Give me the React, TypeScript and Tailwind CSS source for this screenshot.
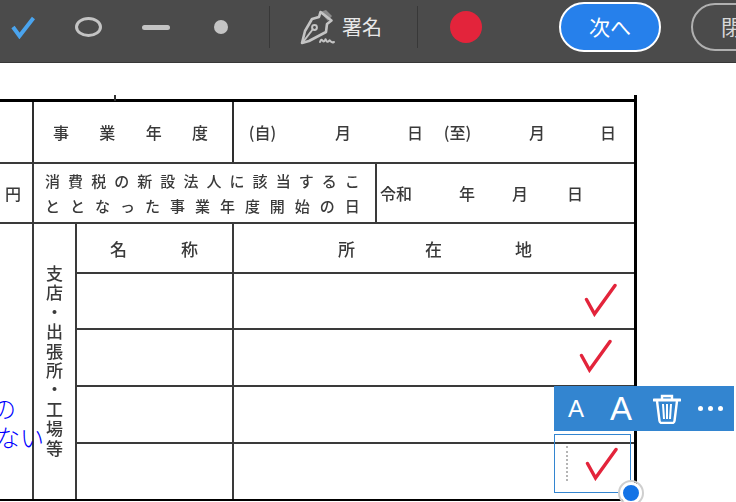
import React from 'react';

const doc = 'text-[#3a3a3a] blur-[0.45px] font-medium';

function Spread({ text, className }: { text: string; className?: string }) {
  return (
    <div className={`flex justify-between ${className ?? ''}`}>
      {text.split('').map((c, i) => (
        <span key={i}>{c}</span>
      ))}
    </div>
  );
}

function Mark({ className }: { className: string }) {
  return (
    <svg viewBox="0 0 34 34" className={`absolute w-[34px] h-[34px] ${className}`} fill="none">
      <path d="M2.5 16.5 L10.5 31 L31 2.5" stroke="#e3243b" strokeWidth="3.4" strokeLinecap="round" strokeLinejoin="miter" />
    </svg>
  );
}

function PenIcon() {
  return (
    <svg viewBox="0 0 36 36" className="w-[36px] h-[36px] shrink-0 ml-[30px]" fill="none">
      <path d="M20 3 L26 1 L32 7 L28 12 Z" fill="#8a8a8a" />
      <path d="M20.5 3 L31.5 11.5 L27 15 L26 23 L9 32 L2 34 L5 22 L12 10 L19 8 Z" stroke="#c4c4c4" strokeWidth="2.6" strokeLinejoin="round" />
      <path d="M3 33 L13 20" stroke="#c4c4c4" strokeWidth="2" />
      <circle cx="14.5" cy="18.5" r="2.4" stroke="#c4c4c4" strokeWidth="2" />
      <path d="M20 33 C22 27 23 36 25 31 C26 28 26 35 29 32 C30 29 30 35 34 33" stroke="#c4c4c4" strokeWidth="2" strokeLinecap="round" />
    </svg>
  );
}

function TrashIcon() {
  return (
    <svg viewBox="0 0 28 30" className="w-[28px] h-[30px] shrink-0 ml-[21px]" fill="none" stroke="#fff" strokeWidth="2.4">
      <path d="M1 6 H27" strokeWidth="3" strokeLinecap="round" />
      <path d="M9 5 V2 H19 V5" />
      <path d="M4 7 L6.5 27 Q6.7 29 9 29 H19 Q21.3 29 21.5 27 L24 7" />
      <path d="M10 10 L11 25 M14 10 V25 M18 10 L17 25" strokeWidth="2" />
    </svg>
  );
}

function Toolbar() {
  return (
    <div className="h-[63px] shrink-0 bg-[#4b4b4b] border-b border-[#383838] flex items-center pb-[8px] pl-[11px] overflow-hidden">
      <svg viewBox="0 0 24 24" className="w-[24px] h-[24px] shrink-0" fill="none">
        <path d="M2 12 L8.5 21 L22.5 3" stroke="#4aa4ee" strokeWidth="4" />
      </svg>
      <div className="w-[27px] h-[20px] shrink-0 ml-[40px] rounded-[50%] border-[3px] border-[#c4c4c4]" />
      <div className="w-[28px] h-[5px] shrink-0 ml-[40px] rounded-full bg-[#c4c4c4]" />
      <div className="w-[14px] h-[14px] shrink-0 ml-[44px] rounded-full bg-[#c4c4c4]" />
      <div className="w-px h-[42px] shrink-0 ml-[41px] bg-[#383838]" />
      <PenIcon />
      <span className="ml-[6px] shrink-0 text-[20px] text-[#e8e8e8] whitespace-nowrap">署名</span>
      <div className="w-px h-[42px] shrink-0 ml-[35px] bg-[#383838]" />
      <div className="w-[32px] h-[32px] shrink-0 ml-[32px] rounded-full bg-[#e3243b]" />
      <button className="w-[102px] h-[50px] ml-[77px] shrink-0 rounded-full bg-[#2680eb] border-2 border-white text-white text-[21px]">
        次へ
      </button>
      <button className="w-[120px] h-[48px] ml-[30px] shrink-0 rounded-full border-2 border-[#b0b0b0] text-[#d8d8d8] text-[21px] text-left pl-[28px] whitespace-nowrap">
        閉じる
      </button>
    </div>
  );
}

function Table() {
  const cell = 'border-l-2 border-[#2e2e2e]';
  const top = 'border-t-2 border-[#3a3a3a]';
  return (
    <div className="w-[637px] mt-[36px] border-t-[3px] border-r-[3px] border-b-2 border-black grid grid-cols-[32px_43px_157px_143px_259px] grid-rows-[60px_60px_50px_56px_57px_57px_57px] text-[16px] leading-none">
      <div />
      <div className={`col-span-2 ${cell} flex items-center justify-between pl-[19px] pr-[24px] ${doc}`}>
        <span>事</span><span>業</span><span>年</span><span>度</span>
      </div>
      <div className={`col-span-2 ${cell} flex items-center pl-[13px] ${doc}`}>
        <span className="w-[31px] text-center">(自)</span>
        <span className="ml-[57px]">月</span>
        <span className="ml-[56px]">日</span>
        <span className="ml-[19px] w-[31px] text-center">(至)</span>
        <span className="ml-[56px]">月</span>
        <span className="ml-[55px]">日</span>
      </div>

      <div className={`${top} flex items-center pl-[5px] ${doc}`}>円</div>
      <div className={`col-span-3 ${cell} ${top} flex flex-col justify-center gap-[10px] pl-[11px] pr-[15px] text-[15px] ${doc}`}>
        <Spread text="消費税の新設法人に該当するこ" />
        <Spread text="ととなった事業年度開始の日" />
      </div>
      <div className={`${cell} ${top} flex items-center pl-[3px] ${doc}`}>
        <span>令和</span>
        <span className="ml-[47px]">年</span>
        <span className="ml-[37px]">月</span>
        <span className="ml-[39px]">日</span>
      </div>

      <div className={`row-span-5 ${top}`} />
      <div className={`row-span-5 ${cell} ${top} flex items-center justify-center ${doc}`}>
        <span className="[writing-mode:vertical-rl] text-[17px] tracking-[2.4px]">支店・出張所・工場等</span>
      </div>
      <div className={`${cell} ${top} flex items-center pl-[33px] text-[17px] ${doc}`}>
        <span>名</span>
        <span className="ml-[54px]">称</span>
      </div>
      <div className={`col-span-2 ${cell} ${top} flex items-center pl-[104px] text-[17px] ${doc}`}>
        <span>所</span>
        <span className="ml-[70px]">在</span>
        <span className="ml-[73px]">地</span>
      </div>

      {[0, 1, 2, 3].map((i) => (
        <React.Fragment key={i}>
          <div className={`${cell} ${top}`} />
          <div className={`col-span-2 ${cell} ${top}`} />
        </React.Fragment>
      ))}
    </div>
  );
}

function Popup() {
  return (
    <div className="absolute left-[554px] top-[323px] w-[180px] h-[45px] bg-[#3385d0] flex items-center text-white font-['Liberation_Sans',sans-serif] leading-none">
      <span className="ml-[14px] text-[24px]">A</span>
      <span className="ml-[26px] text-[33px]">A</span>
      <TrashIcon />
      <div className="ml-[17px] flex gap-[5px]">
        <div className="w-[5px] h-[5px] rounded-full bg-white" />
        <div className="w-[5px] h-[5px] rounded-full bg-white" />
        <div className="w-[5px] h-[5px] rounded-full bg-white" />
      </div>
    </div>
  );
}

export default function App() {
  return (
    <div className="w-[736px] h-[502px] overflow-hidden flex flex-col bg-white font-['Noto_Sans_CJK_JP',sans-serif]">
      <Toolbar />
      <div className="relative flex-1 bg-white">
        <div className="absolute left-[114px] top-[32px] w-[2px] h-[6px] bg-[#333]" />
        <div className="absolute left-[634px] top-[32px] w-[3px] h-[8px] bg-black" />
        <Table />
        <span className="absolute right-[720px] top-[330px] text-[24px] leading-[30px] text-[#0000ff] font-light">の</span>
        <span className="absolute left-[-4px] top-[359px] text-[24px] leading-[30px] text-[#0000ff] font-light">ない</span>
        <Mark className="left-[584px] top-[220px]" />
        <Mark className="left-[579px] top-[276px]" />
        <Popup />
        <div className="absolute left-[554px] top-[371px] w-[77px] h-[59px] border border-[#3385d0]">
          <div className="absolute left-[11px] top-[11px] h-[35px] border-l-2 border-dotted border-[#b5b5b5]" />
        </div>
        <Mark className="left-[585px] top-[384px]" />
        <div className="absolute left-[620px] top-[419px] w-[22px] h-[22px] rounded-full bg-[#1473e6] border-[3px] border-white outline-2 outline-[#cfcfcf]" />
      </div>
    </div>
  );
}
